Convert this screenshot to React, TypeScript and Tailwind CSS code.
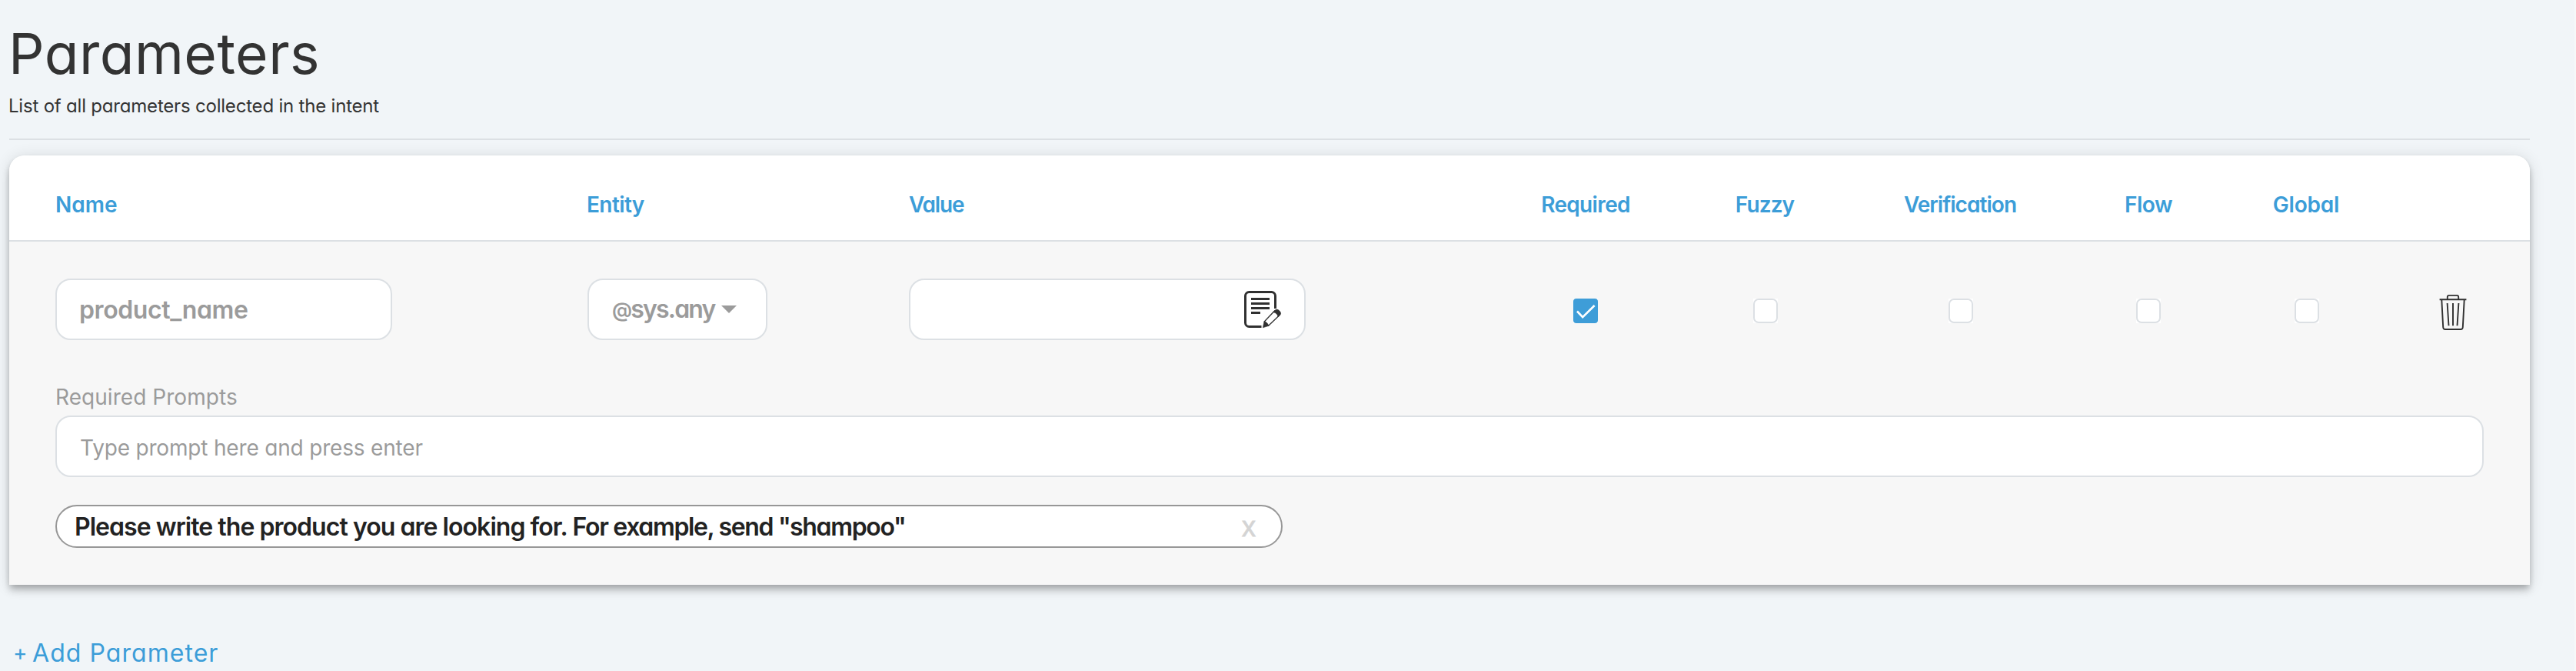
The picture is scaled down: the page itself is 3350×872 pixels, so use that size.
import type { ReactNode } from "react";

const GRID = "grid grid-cols-[692px_418px_763px_234px_234px_274px_214px_198px_131px]";
const FIELD = "flex h-20 items-center rounded-[20px] border-2 border-[#dce0e4] bg-white text-[#9b9b9b]";

function Heading({ children, className = "" }: { children: ReactNode; className?: string }) {
  return <div className={`whitespace-nowrap text-[28px] leading-8 font-semibold text-[#3c9dd8] ${className}`}>{children}</div>;
}

function Checkbox({ checked = false }: { checked?: boolean }) {
  return (
    <div className="flex justify-center pt-[26px]">
      <div className="size-8 bg-white">
        {checked ? (
          <div className="size-8 rounded-[4px] bg-[#3e9dd8]">
            <svg viewBox="0 0 32 32" className="size-8" fill="none" stroke="#fff" strokeWidth="2.6">
              <path d="M5 16.5 12.2 24.2 27.6 9" />
            </svg>
          </div>
        ) : (
          <div className="size-8 rounded-[7px] border-2 border-[#dce0e4] bg-white" />
        )}
      </div>
    </div>
  );
}

function NoteIcon() {
  return (
    <svg viewBox="0 0 48 48" className="size-12 overflow-visible" fill="none" stroke="#303030">
      <path strokeWidth="3" d="M40.5 23V6.5a5 5 0 0 0-5-5h-29a5 5 0 0 0-5 5v35a5 5 0 0 0 5 5H22.5" />
      <path strokeWidth="3" d="M9 10.5H33M9 16.5H33M9 22.5H33M9 28.5H21" />
      <path strokeWidth="1.3" fill="#fff" d="M26.2 40 39.5 26 45.5 32 31.6 45.3Z" />
      <path fill="#303030" strokeWidth="0.6" d="M24.4 47.8 26 39.8C29 40.4 31.2 42.4 31.5 45.5Z" />
      <path fill="#303030" strokeWidth="0.6" d="M37.6 27.6 40.4 24.9Q42.6 23.2 45.1 25.2L46.6 26.8Q48.6 29.2 46.8 31.4L44 34Q43.6 29 37.6 27.6Z" />
    </svg>
  );
}

function TrashIcon() {
  return (
    <svg viewBox="0 0 36 48" className="h-12 w-9" fill="none" stroke="#303030" strokeWidth="1.9">
      <path d="M.6 7.3H35.4" />
      <path d="M10.8 7V4.2Q10.8 1.9 13 1.9H23Q25.2 1.9 25.2 4.2V7" />
      <path d="M3.3 7.5 5.2 43.2Q5.4 46 8 46H28Q30.6 46 30.8 43.2L32.7 7.5" />
      <path d="M10.6 12 12.5 41.3M18 12V41.3M25.4 12 23.5 41.3" />
    </svg>
  );
}

export default function App() {
  return (
    <div className="h-[872px] w-full overflow-hidden border-r-2 border-[#f6f9f9] bg-[#f1f5f8] pr-[58px] pl-3 font-['Inter',sans-serif] text-[#333] [font-feature-settings:'cv11']">
      <h1 className="-ml-px pt-[30px] text-[73px] leading-[80px] tracking-[0.5px]">Parameters</h1>
      <p className="-ml-px mt-3.5 text-2xl leading-7 tracking-[-0.2px]">List of all parameters collected in the intent</p>
      <div className="mt-7 h-0.5 bg-[#dce0e4]" />

      <section className="mt-5 h-[558px] rounded-t-[20px] bg-[#f7f7f7] shadow-[0_4px_8px_-2px_rgba(0,0,0,0.2),0_8px_10px_0_rgba(0,0,0,0.14),0_2px_20px_0_rgba(0,0,0,0.12)]">
        <div className={`${GRID} h-28 items-center rounded-t-[20px] border-b-2 border-[#dce0e4] bg-white pt-[18px] pl-[60px]`}>
          <Heading>Name</Heading>
          <Heading className="-ml-px tracking-[-0.6px]">Entity</Heading>
          <Heading className="tracking-[-1.2px]">Value</Heading>
          <Heading className="text-center tracking-[-0.65px]">Required</Heading>
          <Heading className="pr-0.5 text-center tracking-[-0.9px]">Fuzzy</Heading>
          <Heading className="pr-0.5 text-center tracking-[-0.95px]">Verification</Heading>
          <Heading className="text-center tracking-[-0.5px]">Flow</Heading>
          <Heading className="pr-0.5 text-center tracking-[-0.2px]">Global</Heading>
        </div>

        <div className={`${GRID} pt-12 pl-[60px]`}>
          <div className={`${FIELD} w-[438px] pt-px pl-[29px] text-[32px] font-semibold tracking-[-0.4px]`}>product_name</div>
          <div className={`${FIELD} w-[234px] pl-[30px] text-[32px] font-semibold`}>
            <span className="flex w-[142px] items-center whitespace-nowrap tracking-[-1.8px]">
              <span className="text-[26px]">@</span>sys.any
            </span>
            <svg viewBox="0 0 20 10" className="h-2.5 w-5" fill="#9b9b9b">
              <path d="M0 0H20L10 10Z" />
            </svg>
          </div>
          <div className={`${FIELD} w-[516px] justify-end pr-[30px]`}>
            <NoteIcon />
          </div>
          <Checkbox checked />
          <Checkbox />
          <Checkbox />
          <Checkbox />
          <Checkbox />
          <div className="pt-5 pl-[73px]">
            <TrashIcon />
          </div>
        </div>

        <div className="pr-[60px] pl-[60px]">
          <div className="mt-[58px] text-[28px] leading-8 tracking-[0.05px] text-[#9b9b9b]">Required Prompts</div>
          <div className={`${FIELD} mt-2 pt-1 pl-[30px] text-[28px] tracking-[-0.18px]`}>Type prompt here and press enter</div>
          <div className="mt-9 flex h-14 w-[1596px] items-center justify-between rounded-full border-2 border-[#979797] bg-white pr-[33px] pl-[23px]">
            <span className="pt-0.5 text-[32px] leading-10 font-semibold tracking-[-0.95px] text-[#222]">
              Please write the product you are looking for.
              <span className="tracking-[-1.35px]"> For example, send "shampoo"</span>
            </span>
            <span className="pt-0.5 font-['Liberation_Sans',sans-serif] text-[36px] leading-10 text-[#d4d4d4] [-webkit-text-stroke:0.8px_#d4d4d4]">x</span>
          </div>
        </div>
      </section>

      <button className="mt-[68px] ml-[5px] flex items-center text-[32px] leading-10 text-[#3c9dd8]">
        <span className="w-[25px] pb-0.5 text-left text-[28px]">+</span>
        <span className="tracking-[1.05px]">Add Parameter</span>
      </button>
    </div>
  );
}
